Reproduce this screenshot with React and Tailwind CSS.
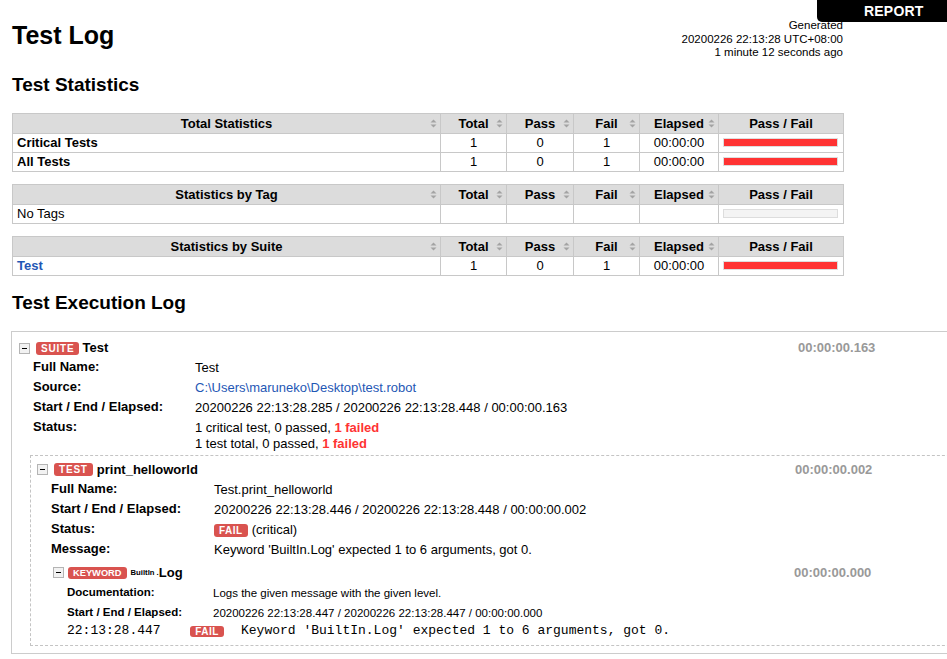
import React from "react";

const SortIcon = () => (
	<svg width="7" height="9" viewBox="0 0 7 9" className="shrink-0">
		<path d="M3.5 0.5L6.5 3.5H0.5z" fill="#a3a3a3" />
		<path d="M0.5 5.5H6.5L3.5 8.5z" fill="#a3a3a3" />
	</svg>
);

const HeadCell = ({ children, sort = true }) => (
	<th className="h-[20px] border border-[#c8c8c8] bg-[#dcdcdc] p-0 font-bold leading-[15px]">
		<div className="flex items-center px-[3px]">
			{sort && <span className="w-[7px] shrink-0" />}
			<span className="flex-1 text-center">{children}</span>
			{sort && <SortIcon />}
		</div>
	</th>
);

const Bar = ({ fail }) => (
	<div className="ml-[4px] mr-[5px] h-[9px] border border-[#dddddd] bg-[#f4f4f4]">
		{fail && <div className="h-full w-full bg-[#ff3333]" />}
	</div>
);

const Cell = ({ children, className = "" }) => (
	<td className={`h-[19px] border border-[#c8c8c8] p-0 text-center leading-[15px] ${className}`}>
		{children}
	</td>
);

const StatTable = ({ title, rows, className = "" }) => (
	<table className={`w-[831px] table-fixed ${className}`}>
		<colgroup>
			<col className="w-[428px]" />
			<col className="w-[66px]" />
			<col className="w-[67px]" />
			<col className="w-[66px]" />
			<col className="w-[79px]" />
			<col className="w-[125px]" />
		</colgroup>
		<thead>
			<tr>
				<HeadCell>{title}</HeadCell>
				<HeadCell>Total</HeadCell>
				<HeadCell>Pass</HeadCell>
				<HeadCell>Fail</HeadCell>
				<HeadCell>Elapsed</HeadCell>
				<HeadCell sort={false}>Pass / Fail</HeadCell>
			</tr>
		</thead>
		<tbody>
			{rows.map((row, index) => (
				<tr key={index}>
					<Cell className={`!text-left pl-[4px] ${row.nameClass || ""}`}>
						{row.name}
					</Cell>
					<Cell>{row.total}</Cell>
					<Cell>{row.pass}</Cell>
					<Cell>{row.fail}</Cell>
					<Cell>{row.elapsed}</Cell>
					<Cell>
						<Bar fail={row.barFail} />
					</Cell>
				</tr>
			))}
		</tbody>
	</table>
);

const Toggle = () => (
	<span className="flex h-[11px] w-[11px] shrink-0 items-center justify-center border border-[#b4b4b4] bg-[#f2f2f2]">
		<span className="h-px w-[5px] bg-black" />
	</span>
);

const Badge = ({ children, className = "" }) => (
	<span
		className={`inline-flex shrink-0 items-center justify-center rounded-[3px] bg-[#d9534f] font-bold text-white ${className}`}
	>
		{children}
	</span>
);

const Meta = ({ label, labelWidth, children }) => (
	<div className="flex items-start py-[2px]">
		<div className={`${labelWidth} shrink-0 font-bold leading-[14px]`}>{label}</div>
		<div className="leading-[16px]">{children}</div>
	</div>
);

const Failed = () => <span className="font-bold text-[#f33]">1 failed</span>;

export default function App() {
	return (
		<div className="relative h-screen overflow-hidden bg-white px-3 font-['Liberation_Sans',Arial,sans-serif] text-[13px] text-black">
			<div className="absolute right-0 top-0 flex h-[22px] w-[130px] items-center rounded-bl-[5px] bg-black pl-[47px] text-[14px] font-bold tracking-[0.2px] text-white">
				REPORT
			</div>

			<div className="flex w-[831px] items-start justify-between pt-[19px]">
				<h1 className="mt-[1px] text-[25px] font-bold leading-[30px]">Test Log</h1>
				<div className="text-right text-[11.5px] leading-[13.5px]">
					<div>Generated</div>
					<div>20200226 22:13:28 UTC+08:00</div>
					<div>1 minute 12 seconds ago</div>
				</div>
			</div>

			<h2 className="mt-[14px] text-[19px] font-bold leading-[22px]">Test Statistics</h2>

			<StatTable
				className="mt-[17px]"
				title="Total Statistics"
				rows={[
					{ name: "Critical Tests", nameClass: "font-bold", total: 1, pass: 0, fail: 1, elapsed: "00:00:00", barFail: true },
					{ name: "All Tests", nameClass: "font-bold", total: 1, pass: 0, fail: 1, elapsed: "00:00:00", barFail: true },
				]}
			/>
			<StatTable
				className="mt-[12px]"
				title="Statistics by Tag"
				rows={[{ name: "No Tags", total: "", pass: "", fail: "", elapsed: "", barFail: false }]}
			/>
			<StatTable
				className="mt-[12px]"
				title="Statistics by Suite"
				rows={[
					{ name: "Test", nameClass: "font-bold text-[#1f57b5]", total: 1, pass: 0, fail: 1, elapsed: "00:00:00", barFail: true },
				]}
			/>

			<h2 className="mt-[16px] text-[19px] font-bold leading-[22px]">Test Execution Log</h2>

			{/* suite */}
			<div className="-ml-px mt-[17px] w-[980px] border border-[#cccccc] pl-[7px] pt-[7px]">
				<div className="flex h-[19px] items-center">
					<div className="flex w-[779px] items-center">
						<Toggle />
						<Badge className="ml-[6px] h-[13px] px-[5px] text-[10px] leading-[13px] tracking-[0.8px]">SUITE</Badge>
						<span className="ml-[3px] font-bold">Test</span>
					</div>
					<span className="font-bold text-[#999]">00:00:00.163</span>
				</div>
				<div className="pl-[14px]">
					<Meta label="Full Name:" labelWidth="w-[162px]">Test</Meta>
					<Meta label="Source:" labelWidth="w-[162px]">
						<span className="text-[#1f57b5]">C:\Users\maruneko\Desktop\test.robot</span>
					</Meta>
					<Meta label="Start / End / Elapsed:" labelWidth="w-[162px]">
						20200226 22:13:28.285 / 20200226 22:13:28.448 / 00:00:00.163
					</Meta>
					<Meta label="Status:" labelWidth="w-[162px]">
						<div>
							1 critical test, 0 passed, <Failed />
						</div>
						<div>
							1 test total, 0 passed, <Failed />
						</div>
					</Meta>
				</div>

				{/* test */}
				<div className="mb-[7px] ml-[11px] mt-[1px] border border-dashed border-[#c4c4c4] pb-[5px] pl-[6px] pt-[4px]">
					<div className="flex h-[20px] items-center">
						<div className="flex w-[758px] items-center">
							<Toggle />
							<Badge className="ml-[6px] h-[13px] px-[5px] text-[10px] leading-[13px] tracking-[0.8px]">TEST</Badge>
							<span className="ml-[4px] font-bold">print_helloworld</span>
						</div>
						<span className="font-bold text-[#999]">00:00:00.002</span>
					</div>
					<div className="pl-[14px]">
						<Meta label="Full Name:" labelWidth="w-[163px]">Test.print_helloworld</Meta>
						<Meta label="Start / End / Elapsed:" labelWidth="w-[163px]">
							20200226 22:13:28.446 / 20200226 22:13:28.448 / 00:00:00.002
						</Meta>
						<Meta label="Status:" labelWidth="w-[163px]">
							<div className="flex items-center">
								<Badge className="mt-[2px] h-[13px] px-[5px] text-[10px] leading-[13px] tracking-[0.5px]">FAIL</Badge>
								<span className="ml-[4px]">(critical)</span>
							</div>
						</Meta>
						<Meta label="Message:" labelWidth="w-[163px]">
							Keyword 'BuiltIn.Log' expected 1 to 6 arguments, got 0.
						</Meta>
					</div>

					{/* keyword */}
					<div className="ml-[16px] mt-[3px]">
						<div className="flex h-[20px] items-center">
							<div className="flex w-[741px] items-center">
								<Toggle />
								<Badge className="ml-[4px] h-[12px] px-[5px] text-[9.3px] leading-[12px]">KEYWORD</Badge>
								<span className="ml-[4px] text-[7.7px] font-bold">BuiltIn .</span>
								<span className="text-[13px] font-bold">Log</span>
							</div>
							<span className="font-bold text-[#999]">00:00:00.000</span>
						</div>
						<div className="pl-[14px] text-[11.5px]">
							<Meta label="Documentation:" labelWidth="w-[146px]">
								Logs the given message with the given level.
							</Meta>
							<Meta label="Start / End / Elapsed:" labelWidth="w-[146px]">
								20200226 22:13:28.447 / 20200226 22:13:28.447 / 00:00:00.000
							</Meta>
							<div className="flex h-[17px] items-center font-['Liberation_Mono',monospace] text-[13px]">
								<span className="w-[123px] shrink-0">22:13:28.447</span>
								<Badge className="h-[11px] w-[34px] font-['Liberation_Sans',Arial,sans-serif] text-[10px] leading-[11px] tracking-[0.5px]">
									FAIL
								</Badge>
								<span className="ml-[17px] whitespace-nowrap">
									Keyword 'BuiltIn.Log' expected 1 to 6 arguments, got 0.
								</span>
							</div>
						</div>
					</div>
				</div>
			</div>
		</div>
	);
}
